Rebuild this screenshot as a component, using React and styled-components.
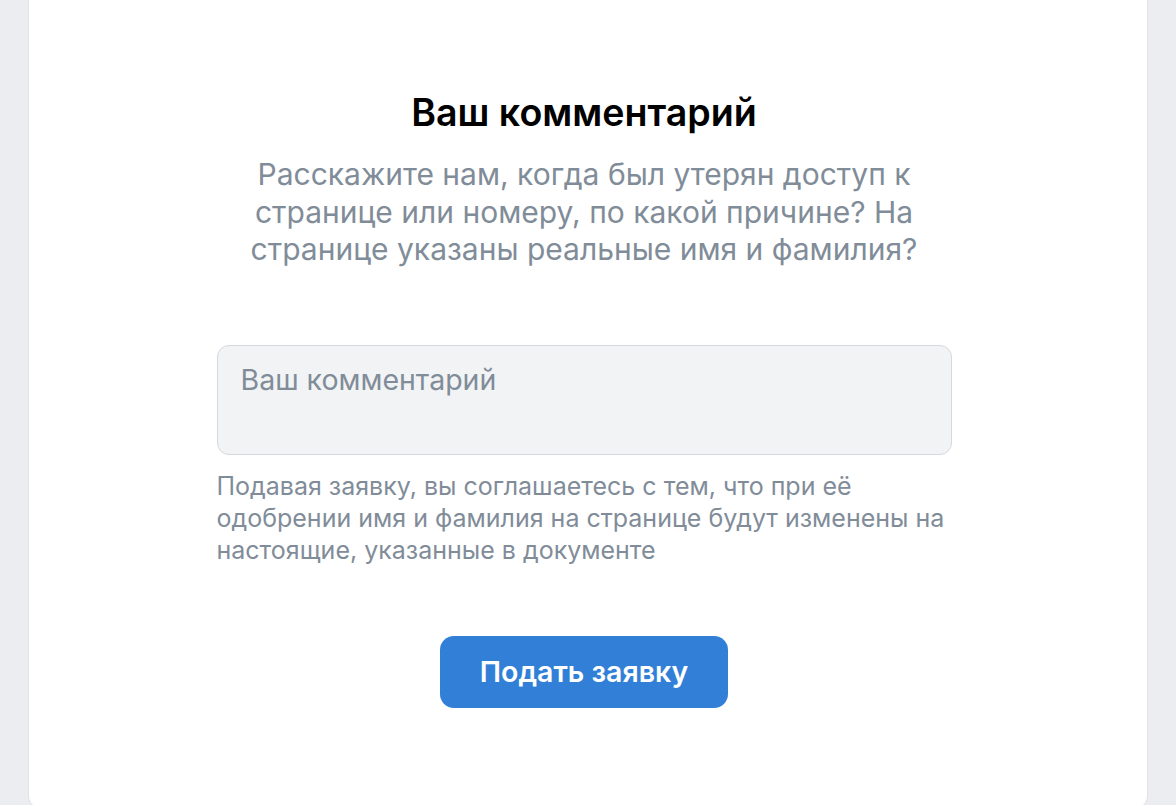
import React from "react";
import styled, { createGlobalStyle } from "styled-components";

const Global = createGlobalStyle`
  html, body { margin: 0; padding: 0; background: #ebedf0; }
  body { font-family: Inter, "Noto Sans", sans-serif; -webkit-font-smoothing: antialiased; }
  * { box-sizing: border-box; }
`;

const Page = styled.div`
  height: 805px;
  overflow: hidden;
  padding: 0 29px;
`;

const Card = styled.div`
  height: 808px;
  background: #ffffff;
  border-radius: 0 0 12px 12px;
  box-shadow: 0 0 0 1px #e1e3e6;
  display: flex;
  flex-direction: column;
  align-items: center;
  padding: 91px 8px 0 0;
`;

const Title = styled.h1`
  margin: 0;
  font-size: 37.6px;
  line-height: 44px;
  font-weight: 600;
  color: #000000;
  text-align: center;
`;

const Subtitle = styled.p`
  margin: 21px 0 0;
  max-width: 760px;
  font-size: 30px;
  line-height: 37.5px;
  font-weight: 400;
  color: #818c99;
  text-align: center;
`;

const Form = styled.div`
  width: 735px;
  margin-top: 76px;
  display: flex;
  flex-direction: column;
`;

const TextArea = styled.textarea`
  width: 100%;
  height: 110px;
  resize: none;
  border: 1.5px solid #d5d9de;
  border-radius: 12px;
  background: #f2f3f5;
  padding: 16px 23px;
  font-family: inherit;
  font-size: 28.5px;
  line-height: 36px;
  color: #000;
  outline: none;
  &::placeholder { color: #818c99; }
`;

const Note = styled.p`
  margin: 15px 0 0;
  font-size: 25px;
  line-height: 32px;
  color: #818c99;
`;

const Button = styled.button`
  margin-top: 70px;
  align-self: center;
  width: 288px;
  height: 72px;
  border: none;
  border-radius: 14px;
  background: #317fd7;
  color: #ffffff;
  font-family: inherit;
  font-size: 28.5px;
  font-weight: 600;
  cursor: pointer;
`;

export default function App() {
  return (
    <>
      <Global />
      <Page>
        <Card>
          <Title>Ваш комментарий</Title>
          <Subtitle>
            Расскажите нам, когда был утерян доступ к<br />
            странице или номеру, по какой причине? На<br />
            странице указаны реальные имя и фамилия?
          </Subtitle>
          <Form>
            <TextArea placeholder="Ваш комментарий" />
            <Note>
              Подавая заявку, вы соглашаетесь с тем, что при её одобрении имя и фамилия на странице будут изменены на настоящие, указанные в документе
            </Note>
            <Button>Подать заявку</Button>
          </Form>
        </Card>
      </Page>
    </>
  );
}
